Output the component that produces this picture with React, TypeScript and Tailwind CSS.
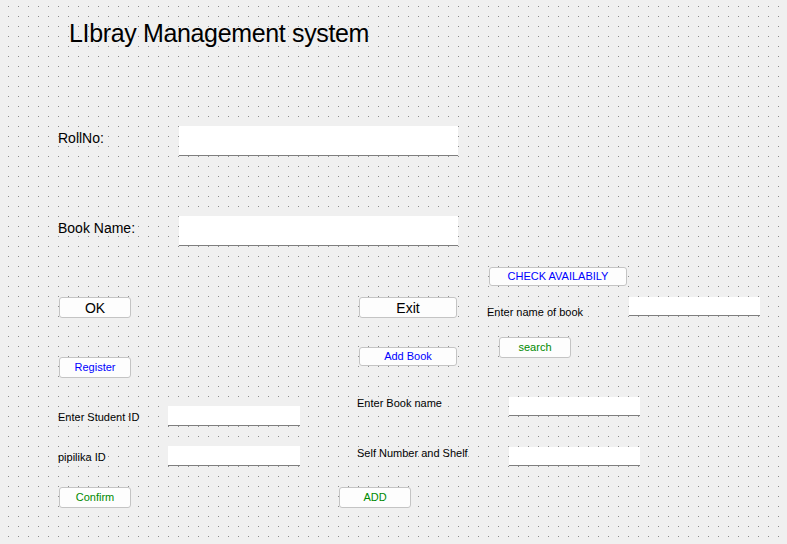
import React from "react";

const font = { fontFamily: '"Liberation Sans", Arial, sans-serif' };

function Btn({
  children,
  className,
  textClass,
}: {
  children: React.ReactNode;
  className: string;
  textClass: string;
}) {
  return (
    <div
      className={
        "flex shrink-0 items-center justify-center rounded-[3px] border border-[#c4c4c4] bg-[#fdfdfd] " +
        className
      }
    >
      <span className={textClass}>{children}</span>
    </div>
  );
}

function Field({ className }: { className: string }) {
  return <div className={"shrink-0 border-b border-[#7f7f7f] bg-white " + className} />;
}

export default function App() {
  return (
    <div
      style={font}
      className="flex h-[544px] w-[787px] flex-col overflow-hidden bg-[#f0f0f0] bg-[conic-gradient(from_270deg_at_1px_1px,#8c8c8c_25%,transparent_0)] bg-[length:10px_10px] bg-[position:8px_6px] text-black"
    >
      {/* Title */}
      <div className="ml-[69px] mt-[18px] h-[30px] text-[25px] leading-[30px] tracking-[-0.35px]">
        LIbray Management system
      </div>

      {/* RollNo row */}
      <div className="mt-[78px] flex items-start">
        <div className="ml-[58px] mt-[2px] w-[121px] text-[14px] leading-[20px]">RollNo:</div>
        <Field className="h-[30px] w-[279px]" />
      </div>

      {/* Book Name row */}
      <div className="mt-[60px] flex items-start">
        <div className="ml-[58px] mt-[2px] w-[121px] text-[14px] leading-[20px]">Book Name:</div>
        <Field className="h-[30px] w-[279px]" />
      </div>

      {/* Band A */}
      <div className="mt-[20px] flex h-[130px] items-start">
        <div className="ml-[59px] flex w-[72px] flex-col">
          <Btn className="mt-[31px] h-[21px] w-[72px]" textClass="text-[14px] leading-none">
            OK
          </Btn>
          <Btn className="mt-[39px] h-[21px] w-[72px]" textClass="text-[11px] leading-none text-[#0000ff]">
            Register
          </Btn>
        </div>
        <div className="ml-[228px] flex w-[98px] flex-col">
          <Btn className="mt-[31px] h-[21px] w-[98px]" textClass="text-[14px] leading-none">
            Exit
          </Btn>
          <Btn className="mt-[29px] h-[19px] w-[98px]" textClass="text-[11px] leading-none text-[#0000ff]">
            Add Book
          </Btn>
        </div>
        <div className="ml-[30px] flex flex-col">
          <Btn className="ml-[2px] mt-[1px] h-[19px] w-[138px]" textClass="text-[11px] leading-none text-[#0000ff]">
            CHECK AVAILABILY
          </Btn>
          <div className="mt-[11px] flex items-start">
            <div className="mt-[8px] w-[142px] text-[11px] leading-[14px]">Enter name of book</div>
            <Field className="h-[19px] w-[131px]" />
          </div>
          <Btn className="ml-[12px] mt-[18px] h-[21px] w-[72px]" textClass="text-[11px] leading-none text-[#008a00]">
            search
          </Btn>
        </div>
      </div>

      {/* Band B */}
      <div className="flex items-start">
        <div className="ml-[58px] flex flex-col">
          <div className="mt-[10px] flex items-start">
            <div className="mt-[4px] w-[110px] text-[11px] leading-[14px]">Enter Student ID</div>
            <Field className="h-[20px] w-[132px]" />
          </div>
          <div className="mt-[20px] flex items-start">
            <div className="mt-[4px] w-[110px] text-[11px] leading-[14px]">pipilika ID</div>
            <Field className="h-[20px] w-[132px]" />
          </div>
          <Btn className="ml-[1px] mt-[21px] h-[21px] w-[72px]" textClass="text-[11px] leading-none text-[#008a00]">
            Confirm
          </Btn>
        </div>
        <div className="ml-[39px] flex flex-col">
          <div className="flex items-start pl-[18px]">
            <div className="w-[152px] text-[11px] leading-[14px]">Enter Book name</div>
            <Field className="mt-[1px] h-[19px] w-[131px]" />
          </div>
          <div className="mt-[30px] flex items-start pl-[18px]">
            <div className="w-[152px] text-[11px] leading-[14px]">Self Number and Shelf</div>
            <Field className="mt-[1px] h-[19px] w-[131px]" />
          </div>
          <Btn className="mt-[21px] h-[21px] w-[72px]" textClass="text-[11px] leading-none text-[#008a00]">
            ADD
          </Btn>
        </div>
      </div>
    </div>
  );
}
